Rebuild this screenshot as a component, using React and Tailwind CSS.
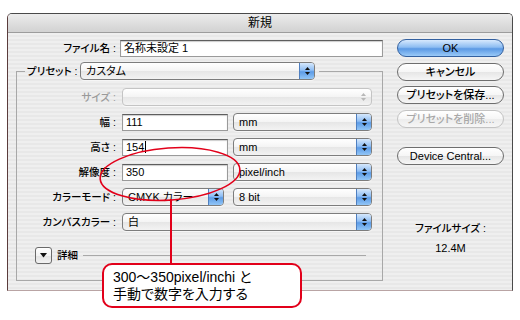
import React from "react";

const FONT = { fontFamily: '"Liberation Sans", "Noto Sans CJK JP", sans-serif' };

function Arrows({ color = "#111" }) {
  return (
    <svg width="7" height="10" viewBox="0 0 7 10">
      <path d="M3.5 1 L6 4 L1 4 Z" fill={color} />
      <path d="M1 6 L6 6 L3.5 9 Z" fill={color} />
    </svg>
  );
}

function Colon() {
  return <span className="ml-[3px] mr-[2px]">:</span>;
}

function Select({ w, text, disabled }) {
  return (
    <div
      className={`flex h-[18px] ${w} overflow-hidden rounded-[4px] border ${
        disabled ? "border-[#c4c4c4]" : "border-[#7d7d7d]"
      } bg-[image:linear-gradient(180deg,#ffffff_0%,#f4f4f4_50%,#e6e6e6_51%,#f3f3f3_100%)] shadow-[0_1px_0_rgba(255,255,255,0.6)]`}
    >
      <div className="flex-1 whitespace-nowrap pl-[5px] text-[11px] leading-[16px] text-black">{text}</div>
      {disabled ? (
        <div className="flex w-[15px] items-center justify-center">
          <Arrows color="#b8b8b8" />
        </div>
      ) : (
        <div className="flex w-[15px] items-center justify-center border-l border-[#4f7fc0] bg-[image:linear-gradient(180deg,#d6e8fc_0%,#8fbef4_45%,#5c9be6_55%,#92c6f7_100%)]">
          <Arrows />
        </div>
      )}
    </div>
  );
}

function Field({ w, text, caret }) {
  return (
    <div
      className={`flex h-[17px] ${w} items-center whitespace-nowrap border border-[#9a9a9a] border-t-[#5e5e5e] bg-white pl-[3px] text-[11px] leading-[15px] text-black shadow-[inset_0_1px_1px_rgba(0,0,0,0.2)]`}
    >
      {text}
      {caret && <span className="ml-[1px] inline-block h-[12px] w-px bg-black" />}
    </div>
  );
}

function Label({ children, gray }) {
  return (
    <div
      className={`w-[101px] whitespace-nowrap text-right text-[10.5px] font-medium leading-[18px] ${
        gray ? "text-[#9a9a9a]" : "text-black"
      }`}
    >
      {children}
      <Colon />
    </div>
  );
}

function AquaButton({ children, primary, disabled, mt }) {
  return (
    <div
      className={`${mt} flex h-[18px] w-[107px] items-center justify-center whitespace-nowrap rounded-full border text-[11px] font-medium leading-[16px] ${
        primary
          ? "border-[#33609f] bg-[image:linear-gradient(180deg,#d7e9fd_0%,#8dbdf2_45%,#5b99e4_55%,#9acaf8_100%)] text-black"
          : disabled
          ? "border-[#c3c3c3] bg-[image:linear-gradient(180deg,#ffffff_0%,#f6f6f6_50%,#ececec_51%,#f6f6f6_100%)] text-[#a8a8a8]"
          : "border-[#6e6e6e] bg-[image:linear-gradient(180deg,#ffffff_0%,#f6f6f6_50%,#e6e6e6_51%,#f6f6f6_100%)] text-black"
      }`}
    >
      {children}
    </div>
  );
}

export default function App() {
  return (
    <div
      className="relative h-[320px] w-[520px] overflow-hidden bg-white [font-feature-settings:'palt']"
      style={FONT}
    >
      <div className="ml-[7px] mt-[13px] flex h-[278px] w-[506px] flex-col overflow-hidden rounded-t-[5px] border border-[#4a4a4a] border-b-[#b9a4a4] border-l-[#5a3c3c]">
        {/* title bar */}
        <div className="flex h-[19px] items-center justify-center border-b border-[#9c9c9c] bg-[image:linear-gradient(180deg,#ececec_0%,#dcdcdc_60%,#d2d2d2_100%)] text-[12px] leading-[18px] text-black">
          新規
        </div>
        {/* body */}
        <div className="flex flex-1 bg-[image:repeating-linear-gradient(180deg,#efefef_0px,#efefef_2px,#e8e8e8_2px,#e8e8e8_4px)]">
          {/* left column */}
          <div className="flex w-[388px] flex-col pl-[8px] pt-[7px]">
            <div className="flex h-[17px] items-center">
              <div className="w-[102px] whitespace-nowrap text-right text-[10.5px] font-medium leading-[17px] text-black">
                ファイル名
                <Colon />
              </div>
              <div className="ml-[2px]">
                <Field w="w-[263px]" text="名称未設定 1" />
              </div>
            </div>

            {/* group */}
            <div className="mt-[14px] flex h-[210px] w-[367px] flex-col border-b border-l border-r border-[#a8a8a8]">
              <div className="-mt-[9px] flex h-[18px] items-center">
                <div className="h-px w-[8px] bg-[#a8a8a8]" />
                <div className="w-[55px] whitespace-nowrap pl-[2px] text-[10.5px] font-medium leading-[18px] text-black">
                  プリセット
                  <Colon />
                </div>
                <Select w="w-[235px]" text="カスタム" />
                <div className="ml-[4px] h-px flex-1 bg-[#a8a8a8]" />
              </div>

              <div className="mt-[8px] flex flex-col gap-[7px]">
                <div className="flex h-[18px] items-center">
                  <Label gray>サイズ</Label>
                  <div className="ml-[4px]">
                    <Select w="w-[250px]" text="" disabled />
                  </div>
                </div>
                <div className="flex h-[18px] items-center">
                  <Label>幅</Label>
                  <div className="ml-[4px]">
                    <Field w="w-[106px]" text="111" />
                  </div>
                  <div className="ml-[5px]">
                    <Select w="w-[139px]" text="mm" />
                  </div>
                </div>
                <div className="flex h-[18px] items-center">
                  <Label>高さ</Label>
                  <div className="ml-[4px]">
                    <Field w="w-[106px]" text="154" caret />
                  </div>
                  <div className="ml-[5px]">
                    <Select w="w-[139px]" text="mm" />
                  </div>
                </div>
                <div className="flex h-[18px] items-center">
                  <Label>解像度</Label>
                  <div className="ml-[4px]">
                    <Field w="w-[106px]" text="350" />
                  </div>
                  <div className="ml-[5px]">
                    <Select w="w-[139px]" text="pixel/inch" />
                  </div>
                </div>
                <div className="flex h-[18px] items-center">
                  <Label>カラーモード</Label>
                  <div className="ml-[4px]">
                    <Select w="w-[102px]" text="CMYK カラー" />
                  </div>
                  <div className="ml-[9px]">
                    <Select w="w-[139px]" text="8 bit" />
                  </div>
                </div>
                <div className="flex h-[18px] items-center">
                  <Label>カンバスカラー</Label>
                  <div className="ml-[4px]">
                    <Select w="w-[250px]" text="白" />
                  </div>
                </div>
              </div>

              <div className="mt-[16px] flex h-[17px] items-center pl-[18px] pr-[16px]">
                <div className="flex h-[17px] w-[17px] items-center justify-center rounded-[3px] border border-[#6a6a6a] bg-[image:linear-gradient(180deg,#ffffff_0%,#f2f2f2_50%,#e2e2e2_51%,#f2f2f2_100%)]">
                  <svg width="7" height="5" viewBox="0 0 7 5">
                    <path d="M0 0 L7 0 L3.5 4.5 Z" fill="#111" />
                  </svg>
                </div>
                <div className="ml-[5px] text-[10.5px] font-medium leading-[17px] text-black">詳細</div>
                <div className="ml-[5px] h-px flex-1 bg-[#a8a8a8]" />
              </div>
            </div>
          </div>

          {/* right column */}
          <div className="flex flex-col pl-[1px] pt-[6px]">
            <AquaButton primary mt="mt-0">OK</AquaButton>
            <AquaButton mt="mt-[6px]">キャンセル</AquaButton>
            <AquaButton mt="mt-[5px]">プリセットを保存...</AquaButton>
            <AquaButton disabled mt="mt-[6px]">プリセットを削除...</AquaButton>
            <AquaButton mt="mt-[19px]">Device Central...</AquaButton>
            <div className="mt-[56px] w-[107px] whitespace-nowrap text-center text-[10.5px] font-medium leading-[14px] text-black">
              ファイルサイズ :
            </div>
            <div className="mt-[6px] w-[107px] text-center text-[11px] leading-[14px] text-black">12.4M</div>
          </div>
        </div>
      </div>

      {/* annotation overlay */}
      <svg className="absolute left-0 top-0" width="520" height="320" viewBox="0 0 520 320">
        <ellipse cx="170" cy="174" rx="70" ry="26" transform="rotate(-4 170 174)" fill="none" stroke="#e2001a" strokeWidth="1.6" />
        <line x1="171" y1="199" x2="171" y2="264" stroke="#e2001a" strokeWidth="2" />
      </svg>
      <div className="absolute left-[102px] top-[263px] h-[45px] w-[200px] whitespace-nowrap rounded-[10px] border-2 border-[#e2001a] bg-white pl-[9px] pt-[4px] text-[14px] leading-[17px] text-black">
        <div>300〜350pixel/inchi と</div>
        <div>手動で数字を入力する</div>
      </div>
    </div>
  );
}
